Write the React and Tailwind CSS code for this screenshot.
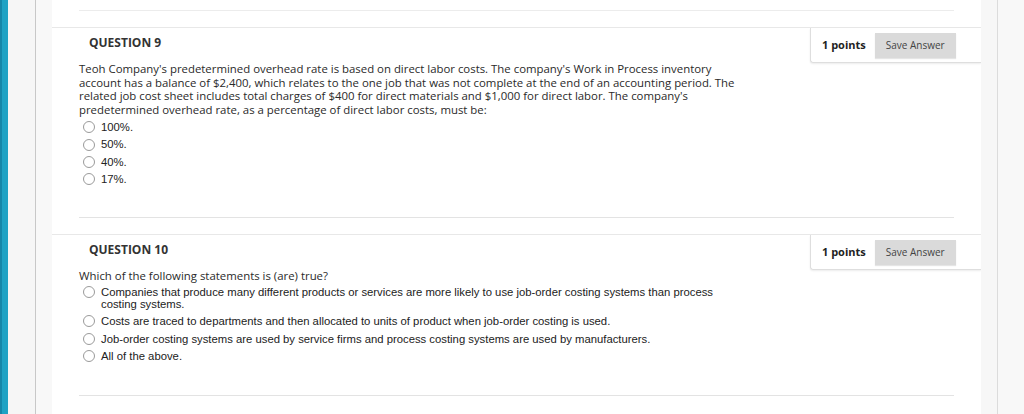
import React from 'react';

const q9Options = ['100%.', '50%.', '40%.', '17%.'];
const q10Options = [
  'Companies that produce many different products or services are more likely to use job-order costing systems than process costing systems.',
  'Costs are traced to departments and then allocated to units of product when job-order costing is used.',
  'Job-order costing systems are used by service firms and process costing systems are used by manufacturers.',
  'All of the above.',
];

function Radio() {
  return <span className="block h-[12px] w-[12px] shrink-0 rounded-full border border-[#9a9a9a] bg-white" />;
}

function Header({ title }) {
  return (
    <div className="flex h-[35px] items-stretch justify-between">
      <h3
        className="pl-[37px] pt-[6px] text-[12px] font-bold text-[#333]"
        style={{ fontFamily: '"Open Sans", sans-serif' }}
      >
        {title}
      </h3>
      <div
        className="flex w-[171px] items-center rounded-bl-[3px] border-b border-l border-[#dedede] pl-[11px] shadow-[0_1px_2px_rgba(0,0,0,0.08)]"
        style={{ fontFamily: '"Open Sans", sans-serif' }}
      >
        <span className="text-[11px] font-bold text-[#222]">1 points</span>
        <button className="ml-[9px] h-[25px] w-[81px] bg-[#dadada] text-[10px] text-[#444] shadow-[0_1px_1px_rgba(0,0,0,0.1)]">
          Save Answer
        </button>
      </div>
    </div>
  );
}

export default function App() {
  return (
    <div className="flex h-[414px] w-[1024px] overflow-hidden bg-[#f8f8f8]">
      {/* left rail */}
      <div className="w-[2px] bg-[#1586a8]" />
      <div className="w-[6px] bg-[#1ea2c4]" />
      <div className="w-[28px] border-r border-[#c8c8c8] bg-[#f6f6f6]" />
      <div className="w-[16px] bg-[#f8f8f8]" />

      {/* content */}
      <div className="w-[929px] bg-white">
        <div className="mx-[27px] mt-[10px] border-t border-[#ececec]" />

        {/* Question 9 */}
        <div className="mt-[16px] border-t border-[#e8e8e8]">
          <Header title="QUESTION 9" />
          <div className="px-[27px]">
            <p
              className="mt-[-1px] w-[670px] text-[11.4px] leading-[13.7px] text-[#2a2a2a]"
              style={{ fontFamily: '"Open Sans", sans-serif' }}
            >
              Teoh Company's predetermined overhead rate is based on direct labor costs. The company's Work in Process inventory
              account has a balance of $2,400, which relates to the one job that was not complete at the end of an accounting period. The
              related job cost sheet includes total charges of $400 for direct materials and $1,000 for direct labor. The company's
              predetermined overhead rate, as a percentage of direct labor costs, must be:
            </p>
            <ul className="mt-[2px]" style={{ fontFamily: '"Liberation Sans", Arial, sans-serif' }}>
              {q9Options.map((o) => (
                <li key={o} className="flex h-[17.3px] items-center gap-[6px] pl-[4px] text-[11.3px] text-[#222]">
                  <Radio />
                  <span>{o}</span>
                </li>
              ))}
            </ul>
            <div className="mt-[29px] border-b border-[#e3e3e3]" />
          </div>
        </div>

        {/* Question 10 */}
        <div className="mt-[16px] border-t border-[#e8e8e8]">
          <Header title="QUESTION 10" />
          <div className="px-[27px]">
            <p
              className="mt-[-1px] text-[11.4px] leading-[13.7px] text-[#2a2a2a]"
              style={{ fontFamily: '"Open Sans", sans-serif' }}
            >
              Which of the following statements is (are) true?
            </p>
            <ul className="mt-[1px] w-[660px]" style={{ fontFamily: '"Liberation Sans", Arial, sans-serif' }}>
              {q10Options.map((o) => (
                <li key={o} className="flex items-start gap-[6px] py-[2.6px] pl-[4px] text-[11.3px] leading-[12px] text-[#222]">
                  <Radio />
                  <span>{o}</span>
                </li>
              ))}
            </ul>
            <div className="mt-[31px] border-b border-[#e3e3e3]" />
          </div>
        </div>
      </div>

      {/* right rail */}
      <div className="w-[17px] border-r border-[#dcdcdc] bg-[#f7f7f7]" />
      <div className="flex-1 bg-[#f8f8f8]" />
    </div>
  );
}
